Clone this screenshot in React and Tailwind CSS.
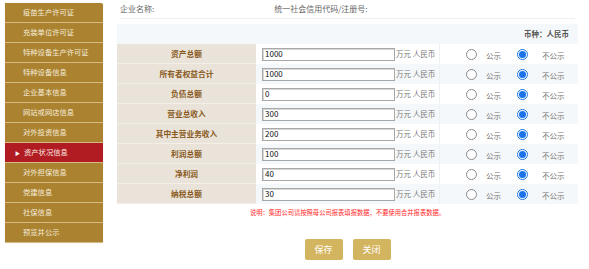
import React from "react";

const menu = [
  "疫苗生产许可证",
  "充装单位许可证",
  "特种设备生产许可证",
  "特种设备信息",
  "企业基本信息",
  "网站或网店信息",
  "对外投资信息",
  "资产状况信息",
  "对外担保信息",
  "党建信息",
  "社保信息",
  "预览并公示",
];

const rows = [
  ["资产总额", "1000"],
  ["所有者权益合计", "1000"],
  ["负债总额", "0"],
  ["营业总收入", "300"],
  ["其中主营业务收入", "200"],
  ["利润总额", "100"],
  ["净利润", "40"],
  ["纳税总额", "30"],
];

const font = { fontFamily: '"Noto Sans CJK SC", "Noto Sans", sans-serif' };

function Radio({ checked }) {
  if (checked) {
    return (
      <span className="flex h-[11px] w-[11px] items-center justify-center rounded-full border border-[#1a73e8] bg-white">
        <span className="h-[7px] w-[7px] rounded-full bg-[#1a73e8]" />
      </span>
    );
  }
  return <span className="block h-[11px] w-[11px] rounded-full border border-[#8a8a8a] bg-white" />;
}

export default function App() {
  return (
    <div className="flex h-[269px] w-[589px] overflow-hidden bg-white" style={font}>
      <div className="ml-[5px] mt-[3px] flex w-[98px] flex-col self-start rounded-tr-[2px] bg-[#aa8230] shadow-[0_0_1px_rgba(0,0,0,0.2)]">
        {menu.map((m) => {
          const active = m === "资产状况信息";
          return (
            <div
              key={m}
              className={
                "flex h-[20px] items-center border-b border-[#d5bb83] text-[7.3px] leading-none " +
                (active ? "bg-[#b01c22] text-[#fbe9e0]" : "text-[#f6ecd8]")
              }
            >
              {active ? (
                <span className="ml-[10px] mr-[4px] text-[5px] text-white">▶</span>
              ) : (
                <span className="ml-[18px]" />
              )}
              <span>{m}</span>
            </div>
          );
        })}
      </div>

      <div className="ml-[14px] flex w-[461px] flex-col">
        <div className="mx-[3px] flex h-[19px] items-center border-b border-[#f0f0f0] text-[8px] text-[#666]">
          <span>企业名称:</span>
          <span className="ml-[120px]">统一社会信用代码/注册号:</span>
        </div>

        <div className="mt-[5px] flex flex-col">
          <div className="flex h-[20px] items-center justify-end bg-[#f5f8fa] pr-[9px] text-[7.5px] font-bold text-[#555]">
            币种：人民币
          </div>
          {rows.map(([label, val], i) => (
            <div
              key={label}
              className={"flex h-[20px] " + (i % 2 === 1 ? "bg-[#f5f8fa]" : "bg-white")}
            >
              <div className="flex w-[139px] items-center justify-center border-b border-[#f3efe8] bg-[#e9e3d9] text-[7.7px] font-bold text-[#8a5a22]">
                {label}
              </div>
              <div className="flex w-[183px] items-center pl-[6px]">
                <div className="flex h-[13px] w-[133px] items-center border border-[#a8a8a8] bg-white pl-[2px] text-[8px] text-[#111] shadow-[inset_1px_1px_0_#d8d8d8]">
                  {val}
                </div>
                <span className="ml-[1px] text-[7.5px] text-[#777]">万元 人民币</span>
              </div>
              <div className="flex w-[139px] items-center border-l border-[#eef1f3]">
                <span className="ml-[26px]">
                  <Radio checked={false} />
                </span>
                <span className="ml-[9px] mt-[3px] text-[7.5px] text-[#777]">公示</span>
                <span className="ml-[16px]">
                  <Radio checked />
                </span>
                <span className="ml-[14px] mt-[3px] text-[7.5px] text-[#777]">不公示</span>
              </div>
            </div>
          ))}
        </div>

        <div className="mt-[4px] text-center text-[6.3px] text-[#ff2a2a]">
          说明：集团公司请按照母公司报表填报数据，不要使用合并报表数据。
        </div>

        <div className="mt-[22px] flex justify-center gap-[10px]">
          <button className="h-[21px] w-[38px] rounded-[2px] bg-[#d4b55f] text-[9px] text-white">保存</button>
          <button className="h-[21px] w-[38px] rounded-[2px] bg-[#d4b55f] text-[9px] text-white">关闭</button>
        </div>
      </div>
    </div>
  );
}
